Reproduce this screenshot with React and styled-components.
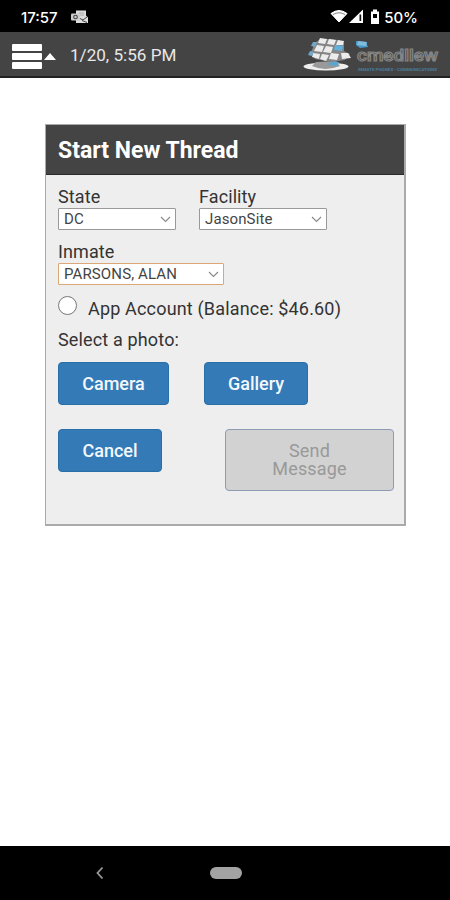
import React, { useState } from 'react';
import styled, { createGlobalStyle } from 'styled-components';

const GlobalStyle = createGlobalStyle`
  * {
    box-sizing: border-box;
  }
  body {
    margin: 0;
    background: #fff;
    font-family: Roboto, 'Liberation Sans', sans-serif;
    color: #333;
  }
  button {
    font-family: inherit;
  }
`;

const MailIcon = () => (
  <svg width="18" height="14" viewBox="0 0 18 14">
    <path d="M5 0.500h10v5l2 2v5.500H5z" fill="#ddd" />
    <path d="M8 3h5M9 5h4" stroke="#aaa" />
    <path d="M8 8l4 2 4-3M11 10.500l5 2" stroke="#444" fill="none" />
    <rect y="3.500" width="9" height="7" rx="1" fill="#ccc" />
    <circle cx="4.500" cy="7" r="1.800" fill="none" stroke="#444" strokeWidth="1.100" />
  </svg>
);

const StatusIcons = () => (
  <svg width="52" height="18" viewBox="0 0 52 18">
    <path d="M2 5.500Q10 -.5 18 5.500L10 14z" fill="#fff" stroke="#fff" strokeLinejoin="round" />
    <path d="M4 6.500Q10 3 16 6.500" fill="none" stroke="#666" strokeWidth=".8" />
    <path d="M34 1.500v13.500H20z" fill="#fff" />
    <path d="M30.500 6.500h1.700v6.500h-1.700z" fill="#111" />
    <path d="M44 1.500h4v2h2V16h-8V3.500h2z" fill="#fff" />
    <path d="M44 6h4v4h-4z" fill="#000" />
  </svg>
);

const Logo = () => (
  <svg width="138" height="38" viewBox="0 0 138 38">
    <ellipse cx="24" cy="29.500" rx="22.500" ry="4" fill="#eee" />
    <path d="M10 29q13 6 28 0l-4-5-20 1z" fill="#999" />
    <path d="M28 24l9 1-2 4-9-1z" fill="#5ba5cf" />
    <path d="M18 2l9 0 9 1 6 3 0 8 6 3-5 6-14 2-16-3-4-7 4-9z" fill="#858585" />
    <g fill="#ececec">
      <path d="M18 1l7 1-2 5-7-1z" />
      <path d="M27 2l7 1-2 5-7-1z" />
      <path d="M36 3l6 1-1 4-7 0z" />
      <path d="M15 8l7 1-2 6-8-1z" />
      <path d="M24 9l7 1-2 6-8-1z" />
      <path d="M11 16l7 1-1 5-7-2z" />
      <path d="M20 17l7 1-3 6-6-2z" />
      <path d="M29 16l8 1-2 6-8-1z" />
      <path d="M39 16l7 0 3 5-9 1z" />
    </g>
    <path d="M33 8l8 1-1 5-8-1z" fill="#61b1dc" />
    <path d="M11 5l4 0-2 5-4-1zM8 14l4 1-2 4-4-1z" fill="#72a9c8" />
    <path d="M54 4l10 1 2 5-8 1-4-3z" fill="#489bc9" />
    <path d="M56 4l9 1-1 4-9-1z" fill="#80bddd" />
    <text
      x="55"
      y="24"
      textLength="81"
      lengthAdjust="spacingAndGlyphs"
      fontFamily="Roboto, sans-serif"
      fontSize="16"
      fontWeight="500"
      fill="#4a4a4a"
      stroke="#858585"
      strokeWidth="1.100"
    >
      cmedllew
    </text>
    <text
      x="56"
      y="34"
      textLength="79"
      lengthAdjust="spacingAndGlyphs"
      fontFamily="Roboto, sans-serif"
      fontSize="4"
      fontWeight="700"
      fill="#497c99"
    >
      INMATE PHONES • COMMUNICATIONS
    </text>
  </svg>
);

const Dropdown = ({ label, value, width, focused }) => (
  <Field>
    <Label>{label}</Label>
    <SelectBox type="button" $width={width} $focused={focused}>
      {value}
      <svg width="11" height="7" viewBox="0 0 11 7">
        <path d="M1 1l4.500 4.500L10 1" fill="none" stroke="#888" strokeWidth="1.100" />
      </svg>
    </SelectBox>
  </Field>
);

const App = () => {
  const [useAccount, setUseAccount] = useState(false);

  return (
    <Screen>
      <GlobalStyle />
      <StatusBar>
        <Clock>17:57</Clock>
        <MailIcon />
        <StatusRight>
          <StatusIcons />
          <span>50%</span>
        </StatusRight>
      </StatusBar>

      <AppBar>
        <MenuButton type="button" aria-label="Menu">
          <Bars>
            <i />
            <i />
            <i />
          </Bars>
          <Caret />
        </MenuButton>
        <DateText>1/20, 5:56 PM</DateText>
        <LogoLink>
          <Logo />
        </LogoLink>
      </AppBar>

      <Content>
        <Card>
          <CardTitle>Start New Thread</CardTitle>
          <CardBody>
            <FieldRow>
              <Dropdown label="State" value="DC" width={118} />
              <Dropdown label="Facility" value="JasonSite" width={128} />
            </FieldRow>
            <FieldRow>
              <Dropdown label="Inmate" value="PARSONS, ALAN" width={166} focused />
            </FieldRow>
            <RadioRow>
              <input type="radio" checked={useAccount} onChange={() => setUseAccount(true)} />
              <span>App Account (Balance: $46.60)</span>
            </RadioRow>
            <PhotoText>Select a photo:</PhotoText>
            <ButtonRow>
              <BlueButton $width={111}>Camera</BlueButton>
              <BlueButton $width={104}>Gallery</BlueButton>
            </ButtonRow>
            <ActionRow>
              <BlueButton $width={104}>Cancel</BlueButton>
              <SendButton disabled>Send Message</SendButton>
            </ActionRow>
          </CardBody>
        </Card>
      </Content>

      <NavBar>
        <svg width="10" height="14" viewBox="0 0 10 14">
          <path d="M7.500 1.500L2.500 7l5 5.500" fill="none" stroke="#999" strokeWidth="1.800" />
        </svg>
        <HomePill />
      </NavBar>
    </Screen>
  );
};

const Screen = styled.div`
  width: 450px;
  height: 900px;
  display: flex;
  flex-direction: column;
  background: #fff;
  overflow: hidden;
`;

const StatusBar = styled.div`
  height: 32px;
  flex: none;
  display: flex;
  align-items: center;
  padding: 2px 32px 0 21px;
  background: #000;
  color: #fff;
  font-family: Inter, Roboto, sans-serif;
  font-size: 15px;
  font-weight: 500;
`;

const Clock = styled.span`
  width: 50px;
`;

const StatusRight = styled.div`
  margin-left: auto;
  display: flex;
  align-items: center;
  gap: 3px;
`;

const AppBar = styled.header`
  height: 46px;
  flex: none;
  display: flex;
  align-items: center;
  padding: 0 10px 0 12px;
  background: #444;
  border-bottom: 2px solid #222;
`;

const MenuButton = styled.button`
  display: flex;
  align-items: center;
  gap: 2px;
  width: 58px;
  padding: 4px 0 0;
  border: 0;
  background: none;
`;

const Bars = styled.span`
  display: flex;
  flex-direction: column;
  gap: 2px;

  i {
    width: 30px;
    height: 7px;
    border-radius: 1px;
    background: #fff;
  }
`;

const Caret = styled.span`
  border: 6px solid transparent;
  border-top: 0;
  border-bottom: 7px solid #fff;
`;

const DateText = styled.span`
  padding-top: 2px;
  font-size: 17.1px;
  color: #e8e8e8;
`;

const LogoLink = styled.div`
  margin: 4px 0 0 auto;
  height: 38px;
`;

const Content = styled.main`
  flex: 1;
  padding: 46px 44px 0 45px;
`;

const Card = styled.section`
  height: 402px;
  border: 1px solid #aaa;
  border-width: 1px 2px 2px 1px;
  background: #eee;
`;

const CardTitle = styled.h1`
  height: 50px;
  margin: 0;
  padding-left: 12px;
  border-bottom: 1px solid #2a2a2a;
  background: #444;
  color: #fff;
  font-size: 23px;
  font-weight: 700;
  line-height: 51px;
`;

const CardBody = styled.div`
  padding: 11px 10px 0 12px;
`;

const FieldRow = styled.div`
  display: flex;
  gap: 23px;
  height: 55px;
`;

const Field = styled.div`
  display: flex;
  flex-direction: column;
`;

const Label = styled.label`
  font-size: 18px;
  line-height: 22px;
  letter-spacing: 0.1px;
`;

const SelectBox = styled.button`
  width: ${(props) => props.$width}px;
  height: 22px;
  display: flex;
  align-items: center;
  justify-content: space-between;
  padding: 0 4px 0 5px;
  border: 1px solid ${(props) => (props.$focused ? '#dda675' : '#999')};
  border-radius: 1px;
  background: #fff;
  color: #444;
  font-size: 15px;
  letter-spacing: 0.12px;
`;

const RadioRow = styled.label`
  display: flex;
  align-items: center;
  gap: 11px;
  height: 22px;
  margin-top: 1px;
  font-size: 18px;
  letter-spacing: 0.17px;

  input {
    appearance: none;
    width: 19px;
    height: 19px;
    margin: 0 0 5px;
    border: 1px solid #777;
    border-radius: 50%;
    background: #fff;
  }
  input:checked {
    border: 5px solid #337ab7;
  }
`;

const PhotoText = styled.p`
  margin: 10px 0 11px;
  font-size: 18px;
  line-height: 22px;
  letter-spacing: 0.15px;
`;

const ButtonRow = styled.div`
  display: flex;
  gap: 35px;
`;

const ActionRow = styled.div`
  display: flex;
  justify-content: space-between;
  align-items: flex-start;
  margin-top: 24px;
`;

const BlueButton = styled.button`
  width: ${(props) => props.$width}px;
  height: 43px;
  padding: 0;
  border: 1px solid #286fa8;
  border-radius: 4px;
  background: #337ab7;
  color: #f4f8fc;
  font-size: 18px;
  font-weight: 500;
`;

const SendButton = styled.button`
  width: 169px;
  height: 62px;
  padding: 0 40px;
  border: 1px solid #8e9bb5;
  border-radius: 4px;
  background: #d2d2d2;
  color: #999;
  font-size: 18px;
  letter-spacing: 0.15px;
  line-height: 18px;
`;

const NavBar = styled.nav`
  height: 54px;
  flex: none;
  display: flex;
  align-items: center;
  gap: 105px;
  padding-left: 95px;
  background: #000;
`;

const HomePill = styled.span`
  width: 32px;
  height: 12px;
  border-radius: 6px;
  background: #a3a3a3;
`;

export default App;
